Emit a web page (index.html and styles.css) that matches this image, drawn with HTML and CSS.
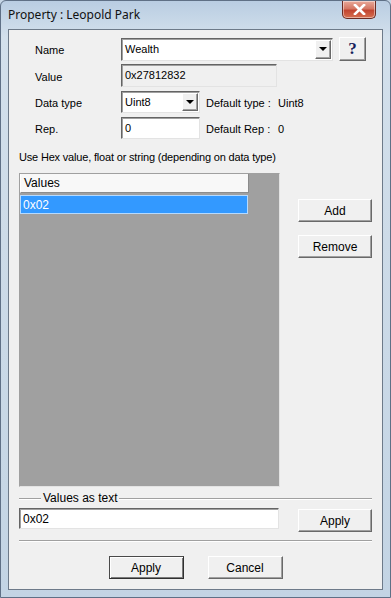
FILE: index.html
```html
<!DOCTYPE html>
<html lang="en">

<head>
    <meta charset="UTF-8">
    <title>Property : Leopold Park</title>
    <link rel="stylesheet" href="styles.css">
</head>

<body>

    <div class="window">
        <div class="titlebar">
            <span class="title">Property : Leopold Park</span>
            <button class="close" type="button" aria-label="Close">
                <svg width="13" height="11" viewBox="0 0 13 11">
                    <path d="M2 1 L11 10 M11 1 L2 10" stroke="#ffffff" stroke-width="2.6" stroke-linecap="square" />
                </svg>
            </button>
        </div>

        <div class="client">
            <div class="row row-name">
                <label class="label">Name</label>
                <div class="combo combo-name">
                    <span class="combo-text">Wealth</span>
                    <span class="drop"><i></i></span>
                </div>
                <button class="btn help" type="button">?</button>
            </div>

            <div class="row row-value">
                <label class="label">Value</label>
                <div class="field readonly">0x27812832</div>
            </div>

            <div class="row row-type">
                <label class="label">Data type</label>
                <div class="combo combo-small">
                    <span class="combo-text">Uint8</span>
                    <span class="drop"><i></i></span>
                </div>
                <span class="info-key">Default type :</span>
                <span class="info-val">Uint8</span>
            </div>

            <div class="row row-rep">
                <label class="label">Rep.</label>
                <div class="field field-small">0</div>
                <span class="info-key">Default Rep :</span>
                <span class="info-val">0</span>
            </div>

            <p class="hint">Use Hex value, float or string (depending on data type)</p>

            <div class="values-area">
                <div class="listview">
                    <div class="list-header">Values</div>
                    <div class="list-row selected">0x02</div>
                </div>
                <div class="side-buttons">
                    <button class="btn btn-add" type="button">Add</button>
                    <button class="btn" type="button">Remove</button>
                </div>
            </div>

            <div class="group">
                <span class="group-title">Values as text</span>
            </div>

            <div class="text-row">
                <div class="field field-text">0x02</div>
                <button class="btn" type="button">Apply</button>
            </div>

            <div class="separator"></div>

            <div class="footer">
                <button class="btn default" type="button">Apply</button>
                <button class="btn" type="button">Cancel</button>
            </div>
        </div>
    </div>

</body>

</html>
```

FILE: styles.css
```css
body {
    margin: 0;
    padding: 0;
    font-family: 'Liberation Sans', Arial, sans-serif;
    font-size: 11px;
    color: #000;
    background: #c6d6e6;
}

.window {
    width: 391px;
    height: 598px;
    box-sizing: border-box;
    display: flex;
    flex-direction: column;
    background: linear-gradient(180deg, #b9cde2 0%, #d3e0ec 6%, #cddbe8 40%, #c3d4e4 100%);
    border: 1px solid #5f7086;
    border-radius: 6px 6px 0 0;
}

/* title bar */
.titlebar {
    height: 28px;
    display: flex;
    justify-content: space-between;
    align-items: flex-start;
    padding: 0 14px 0 7px;
}

.title {
    font-family: 'Noto Sans', 'DejaVu Sans', sans-serif;
    font-size: 12px;
    line-height: 28px;
    color: #111;
}

.close {
    width: 34px;
    height: 18px;
    margin-top: 0;
    padding: 0;
    border: 1px solid #6b2b22;
    border-top: none;
    border-radius: 0 0 5px 5px;
    background: linear-gradient(180deg, #e9a99a 0%, #d47764 45%, #c24530 55%, #d66f4f 100%);
    box-shadow: inset 0 0 0 1px rgba(255, 255, 255, 0.45);
    display: flex;
    justify-content: center;
    align-items: center;
}

/* client area */
.client {
    flex: 1;
    margin: 0 7px 7px 7px;
    background: #f0f0f0;
    border: 1px solid #6d7a89;
    padding: 7px 10px 0 10px;
    display: flex;
    flex-direction: column;
}

.row {
    display: flex;
    align-items: center;
}

.row-value {
    margin-top: 3px;
}

.row-type {
    margin-top: 4px;
}

.row-rep {
    margin-top: 4px;
}

.label {
    width: 102px;
    box-sizing: border-box;
    padding-left: 16px;
    padding-top: 2px;
}

/* sunken edit / combo */
.field,
.combo {
    box-sizing: border-box;
    height: 22px;
    background: #fff;
    border: 1px solid;
    border-color: #646464 #e3e3e3 #e3e3e3 #646464;
    box-shadow: inset 1px 1px 0 #a0a0a0;
    padding: 2px 3px 0 3px;
    line-height: 16px;
}

.readonly {
    width: 156px;
    height: 23px;
    background: #f0f0f0;
}

.field-small {
    width: 79px;
}

.combo {
    display: flex;
    justify-content: space-between;
    padding: 1px 1px 1px 3px;
}

.combo-text {
    padding-top: 1px;
}

.combo-name {
    width: 212px;
    height: 23px;
}

.combo-small {
    width: 79px;
}

.drop {
    width: 16px;
    box-sizing: border-box;
    background: #f0f0f0;
    border: 1px solid;
    border-color: #fff #696969 #696969 #fff;
    box-shadow: inset -1px -1px 0 #a0a0a0;
    display: flex;
    justify-content: center;
    align-items: center;
}

.drop i {
    width: 0;
    height: 0;
    border-left: 4px solid transparent;
    border-right: 4px solid transparent;
    border-top: 4px solid #000;
}

.info-key {
    width: 72px;
    margin-left: 6px;
    padding-top: 1px;
}

.info-val {
    padding-top: 1px;
}

/* raised buttons */
.btn {
    box-sizing: border-box;
    width: 74px;
    height: 23px;
    padding: 0;
    font-family: 'Liberation Sans', Arial, sans-serif;
    font-size: 12px;
    color: #000;
    background: #f0f0f0;
    border: 1px solid;
    border-color: #fff #696969 #696969 #fff;
    box-shadow: inset -1px -1px 0 #a0a0a0;
}

.help {
    width: 27px;
    height: 24px;
    margin-left: 6px;
    font-family: 'Liberation Serif', serif;
    font-size: 17px;
    font-weight: bold;
    color: #15205a;
    line-height: 20px;
}

.hint {
    margin: 12px 0 0 0;
    line-height: 13px;
    letter-spacing: -0.18px;
}

/* values list */
.values-area {
    display: flex;
    align-items: flex-start;
    margin-top: 9px;
}

.listview {
    width: 261px;
    height: 314px;
    box-sizing: border-box;
    background: #a0a0a0;
    border: 1px solid;
    border-color: #a0a0a0 #e3e3e3 #e3e3e3 #a0a0a0;
    display: flex;
    flex-direction: column;
    align-items: flex-start;
}

.list-header {
    width: 229px;
    height: 19px;
    box-sizing: border-box;
    background: #f8f8f8;
    border-right: 1px solid #8c8c8c;
    border-bottom: 1px solid #8c8c8c;
    border-left: 1px solid #fff;
    padding: 2px 3px 0 3px;
    font-size: 12px;
}

.list-row {
    width: 228px;
    height: 19px;
    box-sizing: border-box;
    margin-top: 2px;
    padding: 2px 2px 0 2px;
    font-size: 12px;
}

.selected {
    background: #3399ff;
    color: #fff;
    border: 1px solid #b5daff;
}

.side-buttons {
    display: flex;
    flex-direction: column;
    gap: 13px;
    margin-left: 18px;
    margin-top: 26px;
}

/* values as text group */
.group {
    margin-top: 4px;
    height: 14px;
    display: flex;
    align-items: center;
    position: relative;
}

.group::before {
    content: '';
    position: absolute;
    left: 0;
    right: 0;
    top: 7px;
    border-top: 1px solid #a0a0a0;
    border-bottom: 1px solid #fff;
}

.group-title {
    position: relative;
    margin-left: 22px;
    padding: 0 2px;
    background: #f0f0f0;
    font-size: 12px;
}

.text-row {
    display: flex;
    align-items: flex-start;
    gap: 19px;
    margin-top: 3px;
}

.field-text {
    width: 260px;
    height: 21px;
    font-size: 12px;
}

.text-row .btn {
    margin-top: 1px;
}

.separator {
    margin-top: 8px;
    border-top: 1px solid #a0a0a0;
    border-bottom: 1px solid #fff;
}

.footer {
    display: flex;
    justify-content: center;
    gap: 24px;
    margin-top: 14px;
}

.footer .btn {
    width: 75px;
}

.default {
    border-color: #4a4a4a #303030 #303030 #4a4a4a;
    box-shadow: inset 1px 1px 0 #fff, inset -1px -1px 0 #7a7a7a;
}
```
